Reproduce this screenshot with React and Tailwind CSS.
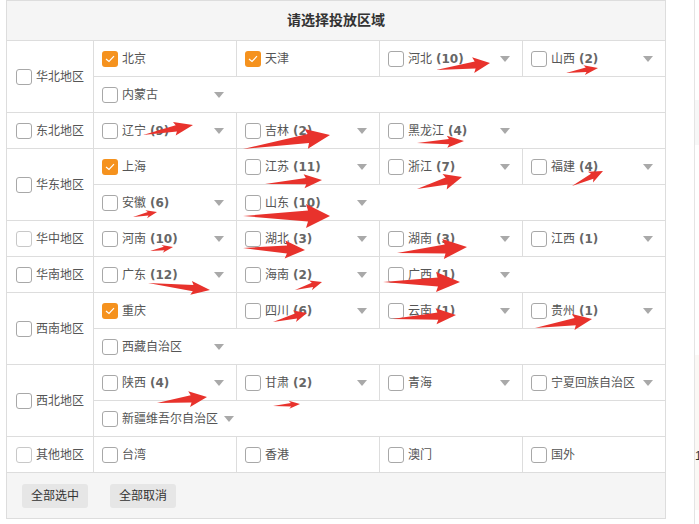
import React from 'react';

const FONT = { fontFamily: '"Liberation Sans", "Noto Sans CJK SC", sans-serif' };

const rows = [
  { label: '华北地区', lines: [
    [{ n: '北京', c: true }, { n: '天津', c: true }, { n: '河北', k: 10, d: true }, { n: '山西', k: 2, d: true }],
    [{ n: '内蒙古', d: true }],
  ] },
  { label: '东北地区', lines: [
    [{ n: '辽宁', k: 9, d: true }, { n: '吉林', k: 2, d: true }, { n: '黑龙江', k: 4, d: true }],
  ] },
  { label: '华东地区', lines: [
    [{ n: '上海', c: true }, { n: '江苏', k: 11, d: true }, { n: '浙江', k: 7, d: true }, { n: '福建', k: 4, d: true }],
    [{ n: '安徽', k: 6, d: true }, { n: '山东', k: 10, d: true }],
  ] },
  { label: '华中地区', light: true, lines: [
    [{ n: '河南', k: 10, d: true }, { n: '湖北', k: 3, d: true }, { n: '湖南', k: 3, d: true }, { n: '江西', k: 1, d: true }],
  ] },
  { label: '华南地区', lines: [
    [{ n: '广东', k: 12, d: true }, { n: '海南', k: 2, d: true }, { n: '广西', k: 1, d: true }],
  ] },
  { label: '西南地区', lines: [
    [{ n: '重庆', c: true }, { n: '四川', k: 6, d: true }, { n: '云南', k: 1, d: true }, { n: '贵州', k: 1, d: true }],
    [{ n: '西藏自治区', d: true }],
  ] },
  { label: '西北地区', lines: [
    [{ n: '陕西', k: 4, d: true }, { n: '甘肃', k: 2, d: true }, { n: '青海', d: true }, { n: '宁夏回族自治区', d: true }],
    [{ n: '新疆维吾尔自治区', d: true }],
  ] },
  { label: '其他地区', light: true, lines: [
    [{ n: '台湾' }, { n: '香港' }, { n: '澳门' }, { n: '国外' }],
  ] },
];

// 标注箭头: 尾 -> 尖, 箭头长度, 半宽
const arrows = [
  [436, 70, 490, 63, 15, 8],
  [566, 73, 598, 68, 12, 5],
  [143, 135, 193, 125, 17, 7],
  [243, 149, 330, 135, 22, 10],
  [417, 143, 464, 141, 15, 6],
  [265, 184, 322, 180, 16, 7],
  [417, 189, 462, 177, 16, 8],
  [572, 186, 603, 171, 12, 6],
  [133, 217, 157, 212, 9, 4],
  [243, 216, 330, 216, 22, 12],
  [150, 251, 173, 247, 9, 4],
  [243, 248, 305, 250, 18, 9],
  [397, 253, 467, 247, 22, 10],
  [148, 283, 210, 290, 17, 7],
  [295, 290, 322, 282, 10, 5],
  [383, 282, 460, 282, 22, 10],
  [273, 322, 307, 313, 11, 6],
  [392, 319, 456, 315, 18, 8],
  [535, 328, 592, 319, 17, 8],
  [157, 403, 207, 397, 16, 8],
  [273, 406, 300, 404, 9, 4],
];

function arrowPoints([x1, y1, x2, y2, hl, hw]) {
  const dx = x2 - x1, dy = y2 - y1;
  const len = Math.hypot(dx, dy);
  const ux = dx / len, uy = dy / len;
  const nx = -uy, ny = ux;
  const bx = x2 - ux * hl, by = y2 - uy * hl;
  const sw = hw * 0.45;
  const bbx = bx - ux * 2, bby = by - uy * 2;
  const p = [
    [x1, y1],
    [bx + nx * sw, by + ny * sw],
    [bbx + nx * hw, bby + ny * hw],
    [x2, y2],
    [bbx - nx * hw, bby - ny * hw],
    [bx - nx * sw, by - ny * sw],
  ];
  return p.map((q) => q.map((v) => v.toFixed(1)).join(',')).join(' ');
}

function Check({ checked, light }) {
  if (checked) {
    return (
      <span className="w-[16px] h-[16px] rounded-[3px] bg-[#f5921e] flex items-center justify-center shrink-0">
        <svg width="10" height="8" viewBox="0 0 10 8">
          <path d="M1 4 L4 6.5 L9 1.2" fill="none" stroke="#fff" strokeWidth="1.2" />
        </svg>
      </span>
    );
  }
  return (
    <span className={`w-[16px] h-[16px] rounded-[3px] border bg-white shrink-0 ${light ? 'border-[#c8c8c8]' : 'border-[#a8a8a8]'}`} />
  );
}

function Caret() {
  return (
    <svg width="10" height="6" viewBox="0 0 10 6" className="shrink-0 ml-[6px]">
      <path d="M0 0 L10 0 L5 6 Z" fill="#a9a9a9" />
    </svg>
  );
}

function Cell({ item, first }) {
  return (
    <div className={`flex items-center pl-[8px] pr-[12px] h-full ${first ? 'w-[142px]' : 'w-[143px] border-l border-[#dddddd]'}`}>
      <Check checked={item.c} />
      <span className="ml-[4px] whitespace-nowrap text-[12px] text-[#555]">{item.n}</span>
      {item.k !== undefined && (
        <span className="ml-[4px] whitespace-nowrap text-[12px] font-bold text-[#666]" style={{ fontFamily: '"DejaVu Sans", sans-serif' }}>
          ({item.k})
        </span>
      )}
      <span className="flex-1" />
      {item.d && <Caret />}
    </div>
  );
}

export default function App() {
  return (
    <div className="relative w-[699px] h-[524px] bg-white flex overflow-hidden" style={FONT}>
      <div className="ml-[6px] w-[660px] h-[519px] border border-[#dddddd] flex flex-col">
        <div className="h-[40px] border-b border-[#dddddd] bg-[#f5f5f5] flex items-center justify-center text-[14px] font-bold text-[#333]">
          请选择投放区域
        </div>

        {rows.map((row) => (
          <div key={row.label} className="flex">
            <div className="w-[87px] border-r border-b border-[#dddddd] flex items-center justify-center">
              <Check light={row.light} />
              <span className="ml-[4px] text-[12px] text-[#555]">{row.label}</span>
            </div>
            <div className="flex-1 flex flex-col">
              {row.lines.map((line, i) => (
                <div key={i} className="h-[36px] border-b border-[#dddddd] flex">
                  {line.map((item, j) => (
                    <Cell key={item.n} item={item} first={j === 0} />
                  ))}
                </div>
              ))}
            </div>
          </div>
        ))}

        <div className="flex-1 bg-[#f5f5f5] flex items-center gap-[22px] pl-[15px]">
          <button className="w-[66px] h-[24px] rounded-[3px] bg-[#e6e6e6] text-[12px] text-[#333]">全部选中</button>
          <button className="w-[66px] h-[24px] rounded-[3px] bg-[#e6e6e6] text-[12px] text-[#333]">全部取消</button>
        </div>
      </div>

      {/* 右侧露出的另一块面板 */}
      <div className="ml-[28px] flex-1 border-l border-[#e4e4e4] flex flex-col">
        <div className="h-[100px]" />
        <div className="h-[45px] bg-[#f7f7f7]" />
        <div className="h-[210px]" />
        <div className="h-[155px] bg-[#fbf8f5] text-[12px] text-[#333] leading-none">
          <div className="h-[95px]" />
          <div>1</div>
        </div>
      </div>

      <svg className="absolute left-0 top-0 pointer-events-none" width="699" height="524">
        {arrows.map((a, i) => (
          <polygon key={i} points={arrowPoints(a)} fill="#e8322c" />
        ))}
      </svg>
    </div>
  );
}
